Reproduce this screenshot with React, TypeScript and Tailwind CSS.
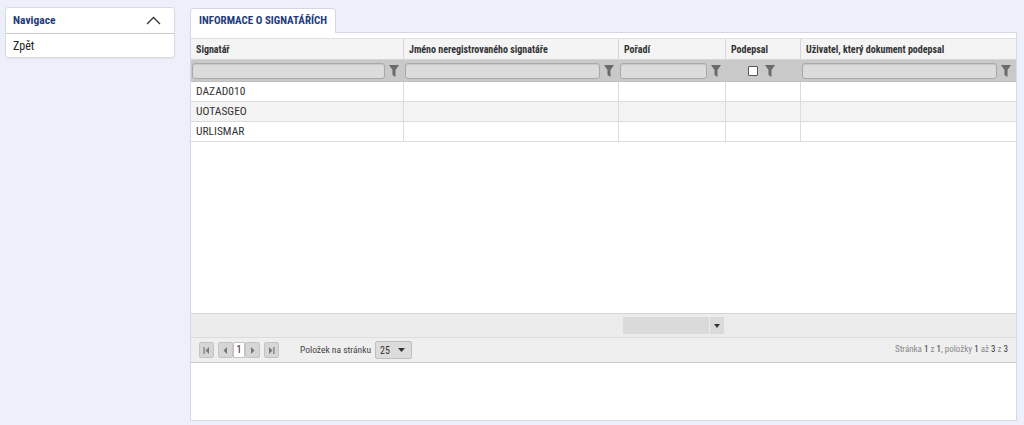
import React from "react";

const font = { fontFamily: '"Liberation Sans Narrow", "Roboto Condensed", Roboto, sans-serif' };

function Funnel() {
  return (
    <svg width="10" height="12" viewBox="0 0 10 12" className="shrink-0">
      <path d="M0 0 H10 L6.5 5 V12 L3.5 10 V5 Z" fill="#6b6b6b" />
    </svg>
  );
}

function FilterInput() {
  return (
    <div className="flex-1 h-[16px] rounded-[3px] bg-[#dcdcdc] border border-[#a9a9a9] shadow-[inset_0_1px_1px_rgba(0,0,0,0.1)]" />
  );
}

const cols = [
  { title: "Signatář", w: "w-[213px]" },
  { title: "Jméno neregistrovaného signatáře", w: "w-[215px]" },
  { title: "Pořadí", w: "w-[107px]" },
  { title: "Podepsal", w: "w-[75px]" },
  { title: "Uživatel, který dokument podepsal", w: "flex-1" },
];

const rows = ["DAZAD010", "UOTASGEO", "URLISMAR"];

function PagerBtn({ children }: { children: React.ReactNode }) {
  return (
    <div className="w-[15px] h-[16px] bg-[#d6d6d6] border border-[#c4c4c4] rounded-[2px] flex items-center justify-center">
      {children}
    </div>
  );
}

export default function App() {
  return (
    <div className="min-h-[425px] h-[425px] bg-[#edf0fa] flex pt-[7px] pl-[5px] pr-[7px] text-[#333]" style={font}>
      {/* Left nav */}
      <div className="w-[170px] shrink-0">
        <div className="bg-white border border-[#d9dbe3] rounded-[3px] shadow-[0_1px_1px_rgba(0,0,0,0.05)]">
          <div className="h-[26px] flex items-center justify-between pl-[7px] pr-[13px] border-b border-[#c9c9c9]">
            <span className="text-[11.5px] font-bold text-[#233b7d]">Navigace</span>
            <svg width="15" height="9" viewBox="0 0 15 9">
              <path d="M1 8 L7.5 1.5 L14 8" fill="none" stroke="#333" strokeWidth="1.3" />
            </svg>
          </div>
          <div className="h-[23px] flex items-center pl-[7px] text-[12px] text-[#222]">Zpět</div>
        </div>
      </div>

      {/* Main */}
      <div className="ml-[15px] flex-1 flex flex-col">
        <div className="flex">
          <div className="h-[25px] w-[146px] bg-white border border-b-0 border-[#d5d8e2] rounded-t-[4px] flex items-center pl-[8px] relative top-[1px]">
            <span className="text-[11px] font-bold text-[#233b7d] whitespace-nowrap">INFORMACE O SIGNATÁŘÍCH</span>
          </div>
        </div>
        <div className="h-[389px] bg-white border border-[#d5d8e2] flex flex-col pt-[5px]">
          {/* header */}
          <div className="flex h-[22px] bg-[#f4f4f4] border-t border-[#e0e0e0] border-b border-b-[#d6d6d6]">
            {cols.map((c, i) => (
              <div
                key={i}
                className={`${c.w} shrink-0 flex items-center pl-[5px] text-[10px] font-bold text-[#333] ${i < 4 ? "border-r border-[#d6d6d6]" : ""}`}
              >
                {c.title}
              </div>
            ))}
          </div>
          {/* filter row */}
          <div className="flex h-[22px] bg-[#c9c9c9] border-b border-[#c0c0c0]">
            {cols.map((c, i) => (
              <div key={i} className={`${c.w} shrink-0 flex items-center pl-[1px] pr-[5px] gap-[4px]`}>
                {i === 3 ? (
                  <div className="flex-1 flex items-center justify-center gap-[7px]">
                    <div className="w-[10px] h-[10px] bg-white border border-[#555] rounded-[1px]" />
                    <Funnel />
                  </div>
                ) : (
                  <>
                    <FilterInput />
                    <Funnel />
                  </>
                )}
              </div>
            ))}
          </div>
          {/* rows */}
          <div className="h-[231px]">
            {rows.map((r, ri) => (
              <div key={ri} className={`flex h-[20px] border-b border-[#dcdcdc] ${ri === 1 ? "bg-[#f3f3f3]" : "bg-white"}`}>
                {cols.map((c, i) => (
                  <div
                    key={i}
                    className={`${c.w} shrink-0 flex items-center pl-[5px] pt-[1px] text-[11.5px] text-[#333] ${i < 4 ? "border-r border-[#dcdcdc]" : ""}`}
                  >
                    {i === 0 ? r : ""}
                  </div>
                ))}
              </div>
            ))}
          </div>
          {/* scroll area */}
          <div className="h-[24px] bg-[#ececec] border-t border-[#d4d4d4] flex items-center">
            <div className="ml-[432px] w-[86px] h-[17px] bg-[#dadada]" />
            <div className="ml-[1px] w-[14px] h-[17px] bg-[#dadada] flex items-center justify-center">
              <svg width="6" height="4" viewBox="0 0 6 4">
                <path d="M0 0 H6 L3 4 Z" fill="#333" />
              </svg>
            </div>
          </div>
          {/* pager */}
          <div className="h-[26px] bg-[#efefef] border-t border-[#dcdcdc] border-b border-b-[#c8c8c8] flex items-center pl-[8px] pr-[8px]">
            <PagerBtn>
              <svg width="7" height="7" viewBox="0 0 7 7">
                <rect x="0.5" y="0" width="1.2" height="7" fill="#777" />
                <path d="M6 0 V7 L2.5 3.5 Z" fill="#777" />
              </svg>
            </PagerBtn>
            <div className="ml-[4px]">
              <PagerBtn>
                <svg width="5" height="7" viewBox="0 0 5 7">
                  <path d="M4 0 V7 L0.5 3.5 Z" fill="#777" />
                </svg>
              </PagerBtn>
            </div>
            <div className="w-[12px] h-[16px] bg-white border border-[#c4c4c4] flex items-center justify-center text-[11px] text-[#333]">1</div>
            <PagerBtn>
              <svg width="5" height="7" viewBox="0 0 5 7">
                <path d="M1 0 V7 L4.5 3.5 Z" fill="#777" />
              </svg>
            </PagerBtn>
            <div className="ml-[4px]">
              <PagerBtn>
                <svg width="7" height="7" viewBox="0 0 7 7">
                  <path d="M1 0 V7 L4.5 3.5 Z" fill="#777" />
                  <rect x="5.3" y="0" width="1.2" height="7" fill="#777" />
                </svg>
              </PagerBtn>
            </div>
            <span className="ml-[21px] text-[9.5px] text-[#444]">Položek na stránku</span>
            <div className="ml-[4px] w-[37px] h-[18px] bg-[#dcdcdc] border border-[#bdbdbd] rounded-[2px] flex items-center justify-between pl-[4px] pr-[6px] text-[10px] text-[#333]">
              <span>25</span>
              <svg width="7" height="4" viewBox="0 0 7 4">
                <path d="M0 0 H7 L3.5 4 Z" fill="#333" />
              </svg>
            </div>
            <div className="flex-1" />
            <span className="text-[9px] text-[#888]">
              Stránka <span className="text-[#333]">1</span> z <span className="text-[#333]">1</span>, položky <span className="text-[#333]">1</span> až <span className="text-[#333]">3</span> z <span className="text-[#333]">3</span>
            </span>
          </div>
          <div className="flex-1 bg-white" />
        </div>
      </div>
    </div>
  );
}
